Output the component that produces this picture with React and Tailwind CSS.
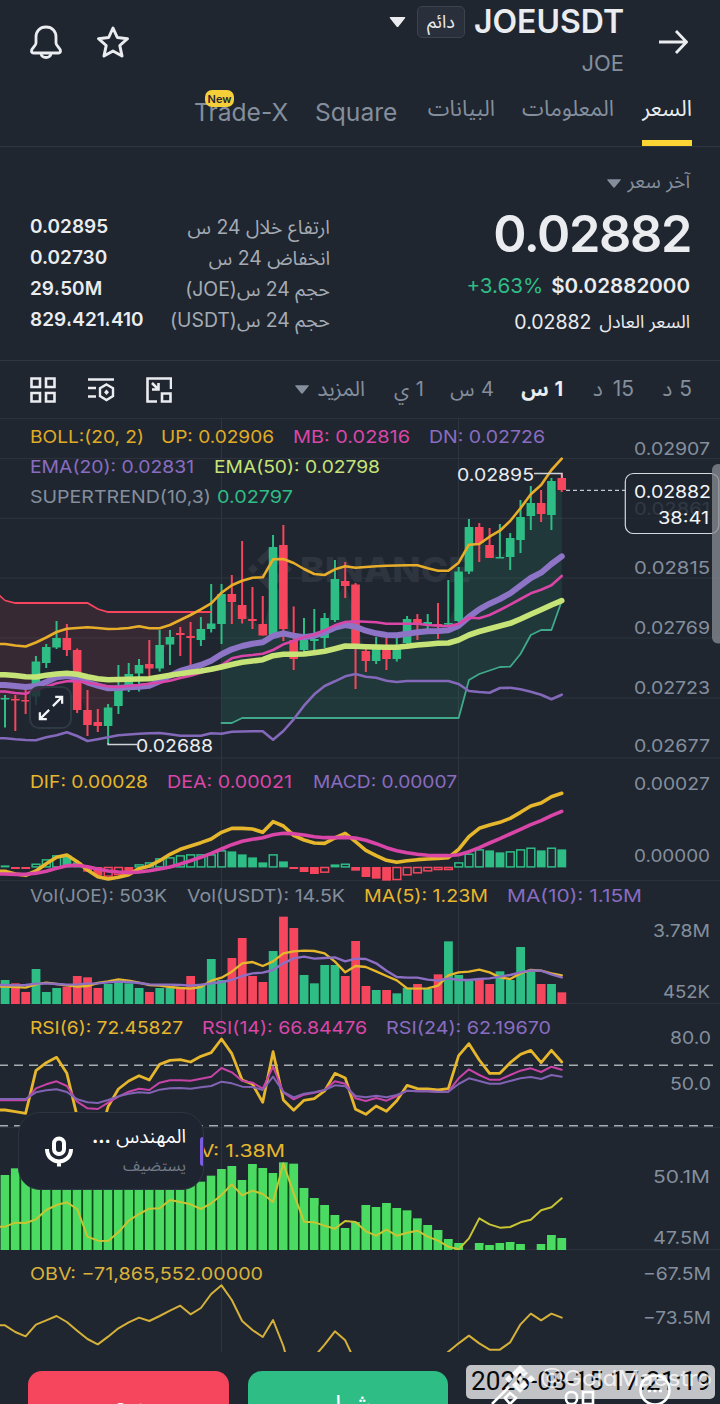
import React from "react";

const UP = "#2ebd85";
const DOWN = "#f6465d";
const YELLOW = "#e6b62c";
const PINK = "#d946a8";
const PURPLE = "#8a6cc0";
const GRAY = "#848e9c";
const LIME = "#c6e377";

const px = (i) => 5 + i * 10.31;

// [color, body top, body bottom, wick top, wick bottom]
const candles = [
  ["g", 698, 699.5, 695, 727.5], ["r", 699, 700.5, 695, 731], ["r", 700, 701.5, 690, 714],
  ["g", 661.5, 696.5, 656, 705], ["g", 647, 663, 644, 668], ["g", 638, 647.5, 621, 649],
  ["r", 638, 650, 624, 656], ["r", 650, 710, 648.5, 713], ["r", 710, 725, 690, 736],
  ["r", 722, 726, 709, 732], ["g", 707.5, 726, 704, 744], ["g", 690, 706, 665, 714],
  ["g", 674, 688, 663, 692], ["g", 665, 673.5, 659, 691.5], ["r", 664, 668.5, 640, 678],
  ["g", 645, 668.5, 630, 671.5], ["g", 637, 644.5, 630, 665], ["r", 633, 635, 627, 656],
  ["r", 636, 638, 622, 667], ["g", 629, 640, 617, 646], ["g", 623.5, 629, 584, 632.5],
  ["g", 594, 624, 584, 644], ["r", 594, 602, 575, 624], ["r", 605, 619, 541, 623.5],
  ["r", 619, 621, 587, 629], ["r", 624, 635.5, 596, 635.5], ["g", 547, 636, 535, 636],
  ["r", 545, 629, 525, 641], ["r", 640, 659, 606.5, 670], ["g", 640, 650, 618, 653],
  ["g", 639, 641, 609, 652], ["g", 618, 638, 613, 648], ["g", 579, 620, 560, 622],
  ["r", 581, 586, 562, 598], ["r", 584.5, 648, 583, 689], ["r", 651, 661, 648, 672],
  ["g", 648, 661, 637, 664], ["r", 645, 659, 637, 670], ["g", 645, 659, 638, 661.5],
  ["g", 619, 643, 616, 645], ["r", 619, 624, 614, 640], ["g", 622, 624, 614, 632],
  ["r", 624, 626, 603, 639], ["g", 623, 624.5, 580, 627], ["g", 571.5, 621, 567, 622],
  ["g", 527, 571.5, 519, 574], ["r", 527, 543, 523, 562], ["r", 545, 558, 528, 558],
  ["g", 557, 558.5, 524, 558], ["g", 538, 557, 533, 570], ["g", 517, 540, 500, 553],
  ["g", 503, 516, 486, 530], ["r", 503, 514, 490, 522], ["g", 481, 515, 478, 530],
  ["r", 478, 490, 473, 492],
];

const bollUp = [644, 645.5, 646.5, 642.5, 637.5, 632, 628.7, 628, 627.3, 628, 629, 628.7, 628, 626.3, 628.3, 628.3, 625, 620, 615, 609.3, 603.3, 592.7, 585.3, 580.7, 577.7, 577.3, 559.3, 559, 563, 569, 574, 575, 569.3, 566.3, 567.7, 567, 566.3, 565.7, 565.5, 565.3, 565.3, 568.3, 570.7, 570.7, 562.7, 544.7, 544, 536.7, 530.7, 521, 508.3, 494.3, 485, 470, 458.7];
const bollMid = [691.5, 693, 693.7, 690, 686.7, 683.3, 681.3, 681, 682.7, 684.5, 686.5, 687, 686, 685, 683.7, 682.5, 680.7, 678, 675.7, 672.7, 669.3, 665, 658.3, 656, 655, 653.7, 650, 644.3, 641, 637.3, 634.7, 630.3, 625.3, 622, 621.3, 621.7, 622.3, 623.7, 623.7, 623.7, 623.7, 625, 625.7, 626, 624, 617.7, 618.3, 615, 610, 604.7, 599, 593.3, 589.7, 585.3, 576];
const bollDn = [738.3, 739.3, 740, 740.3, 737.3, 735.3, 732.3, 736, 741, 739.2, 737.3, 735.3, 734.5, 733.7, 733.3, 733, 734.3, 735.7, 735.7, 735.7, 733.3, 733.7, 731.7, 731.5, 731.3, 731.3, 739.7, 731, 719.3, 705.7, 694.3, 686, 681.3, 676.3, 674, 676.7, 677.7, 680.7, 682, 681, 681, 681, 681, 681, 684, 691, 692, 692.7, 688, 687.7, 689.3, 691.7, 694.7, 699.3, 694.7];
const ema20 = [685, 686, 687, 686, 682, 677.3, 676, 677.7, 682.3, 685.7, 688.3, 688, 687.3, 686.7, 685.7, 681.3, 675.7, 671, 668, 665, 660.7, 654.3, 649.3, 646, 643.7, 642.3, 636, 633.3, 635.7, 637.3, 635.7, 632.3, 627.7, 625, 626.7, 630.7, 633.3, 635, 635.3, 633.7, 632.3, 631.3, 631, 630.3, 625.7, 617, 609.3, 603.7, 599, 593.3, 585.7, 578, 572.7, 564, 556.3];
const ema50 = [674.7, 675.5, 676.8, 677, 675.3, 674, 673.3, 674.3, 676.7, 678.7, 679.7, 679.5, 679.3, 679, 678.7, 677, 675.3, 673.8, 672.3, 671, 669.3, 667, 664.5, 662.3, 661, 659.7, 655.7, 654.3, 654.3, 654, 652.7, 651.3, 648.7, 646, 646.3, 646.7, 647, 647.2, 647.3, 646.3, 645, 644.2, 643.3, 643, 640, 635, 631.5, 628.7, 626, 623.3, 619, 614.3, 609.7, 605, 600.7];
const trendDown = [600.5, 603, 603, 603, 603, 603, 603, 603, 603, 609, 612, 612, 612, 612, 612, 612, 612, 612, 612, 612, 612];
const trendUp = [723, 723, 718, 718, 718, 718, 718, 718, 718, 718, 718, 718, 718, 718, 718, 718, 718, 718, 718, 718, 718, 718, 718, 718, 680, 674, 670.5, 667, 666.7, 654, 635, 630, 630, 601];

// the lower panels keep their samples in thirds of a pixel
// negative = below zero line, second value 1 = hollow bar
const macd = [[6, 0], [-6, 0], [-6, 0], [11, 1], [24, 1], [36, 1], [36, 0], [15, 0], [-14, 0], [-26, 0], [-29, 1], [-24, 1], [-19, 0], [9, 1], [15, 1], [27, 1], [30, 1], [36, 1], [39, 1], [39, 1], [39, 1], [51, 1], [48, 0], [39, 0], [30, 0], [15, 0], [39, 1], [18, 0], [-6, 0], [-15, 0], [-21, 0], [-17, 1], [9, 0], [11, 1], [-11, 0], [-30, 0], [-35, 0], [-41, 0], [-39, 1], [-25, 1], [-19, 1], [-13, 1], [-9, 1], [-9, 1], [15, 1], [41, 1], [54, 1], [51, 0], [45, 0], [48, 1], [54, 1], [59, 1], [51, 0], [59, 1], [54, 0]];
const dif = [334, 342, 346, 333, 311, 292, 285, 305, 330, 350, 357, 352, 344, 326, 318, 302, 283, 268, 258, 248, 237, 217, 205, 205, 207, 217, 185, 198, 226, 240, 249, 250, 234, 220, 245, 271, 287, 301, 307, 302, 299, 297, 295, 293, 268, 230, 205, 195, 187, 175, 157, 138, 129, 110, 100];
const dea = [342, 343, 343, 340, 334, 325, 317, 316, 320, 327, 333, 336, 338, 336, 332, 327, 321, 312, 302, 292, 280, 267, 254, 244, 238, 233, 224, 220, 221, 225, 230, 233, 233, 232, 234, 241, 251, 263, 272, 278, 283, 286, 287, 287, 284, 275, 263, 249, 236, 222, 208, 194, 182, 167, 154];

const volColors = "grrgggrrrrggggrggrrgggrrrrgrrggggrrrgrggrgrgggrrggggrgr";
const vol = [660, 670, 696, 627, 696, 684, 680, 648, 652, 684, 672, 660, 670, 684, 696, 684, 684, 684, 648, 675, 597, 660, 594, 534, 648, 666, 573, 470, 504, 645, 670, 615, 615, 648, 543, 678, 690, 690, 700, 683, 672, 687, 643, 544, 645, 663, 660, 672, 634, 660, 561, 635, 672, 672, 697];
const ma5 = [680, 681, 683, 673, 668, 672, 676, 680, 678, 669, 664, 658, 662, 668, 675, 677, 681, 684, 686, 681, 662, 653, 635, 610, 606, 618, 604, 580, 574, 572, 573, 580, 605, 637, 618, 621, 634, 648, 661, 685, 686, 685, 677, 646, 637, 635, 629, 637, 652, 657, 640, 630, 632, 640, 646];
const ma10 = [675, 676, 675, 671, 670, 672, 674, 673, 671, 670, 667, 665, 666, 669, 673, 674, 674, 675, 677, 674, 670, 666, 660, 648, 640, 638, 630, 610, 595, 590, 596, 594, 592, 604, 596, 597, 610, 632, 651, 653, 653, 659, 662, 655, 660, 660, 657, 655, 650, 645, 637, 631, 632, 643, 652];

const rsi6 = [300, 305, 310, 182, 158, 142, 190, 320, 400, 400, 290, 237, 213, 197, 210, 163, 151, 149, 156, 139, 128, 87, 131, 210, 222, 277, 125, 270, 301, 271, 266, 243, 190, 204, 298, 313, 288, 304, 272, 226, 236, 237, 240, 236, 137, 101, 150, 190, 190, 158, 133, 121, 158, 121, 156];
const rsi14 = [271, 271, 271, 235, 223, 214, 228, 275, 295, 297, 278, 260, 245, 236, 240, 218, 211, 211, 212, 206, 200, 174, 187, 212, 218, 236, 170, 247, 268, 254, 248, 240, 214, 221, 265, 273, 264, 272, 258, 242, 244, 244, 245, 245, 205, 178, 195, 209, 209, 195, 182, 175, 186, 170, 179];
const rsi24 = [267, 267, 267, 247, 241, 238, 246, 268, 277, 279, 270, 259, 251, 247, 249, 239, 235, 234, 236, 232, 228, 215, 220, 230, 231, 240, 200, 246, 262, 251, 247, 240, 226, 229, 258, 262, 257, 262, 255, 242, 244, 244, 246, 245, 222, 205, 213, 221, 221, 213, 205, 201, 207, 195, 200];

const flow = [495, 475, 470, 470, 470, 470, 470, 470, 470, 470, 470, 470, 470, 470, 470, 470, 470, 480, 500, 515, 497, 477, 468, 510, 462, 474, 489, 457, 461, 534, 564, 585, 615, 654, 636, 585, 591, 579, 594, 601, 625, 645, 660, 687, 699, 720, 699, 705, 699, 696, 702, 720, 702, 675, 684];
const flowLine = [650, 638, 639, 628, 600, 585, 577, 597, 680, 692, 693, 667, 632, 612, 596, 595, 570, 576, 583, 597, 580, 555, 523, 556, 542, 552, 576, 460, 550, 635, 637, 647, 656, 633, 636, 664, 677, 659, 677, 668, 662, 680, 692, 710, 718, 685, 625, 643, 653, 651, 637, 629, 601, 592, 565];
const obv = [226, 246, 259, 224, 211, 198, 216, 242, 267, 283, 260, 235, 217, 203, 213, 198, 182, 167, 193, 174, 132, 106, 150, 213, 240, 261, 210, 288, 400, 380, 320, 284, 244, 271, 337, 380, 400, 400, 400, 400, 400, 380, 340, 305, 280, 257, 280, 299, 299, 277, 223, 191, 211, 191, 203];

const Line = ({ ys, y0 = 0, k = 1, from = 0, color, width = 2.6 }) => {
  const pts = ys.map((v, i) => `${px(i + from)},${y0 + v * k}`);
  if (from === 0) pts.unshift(`-5,${y0 + ys[0] * k}`);
  return (
    <polyline
      points={pts.join(" ")}
      fill="none"
      stroke={color}
      strokeWidth={width}
      strokeLinejoin="round"
      strokeLinecap="round"
    />
  );
};

const Label = ({ x, y, w, fill = GRAY, size = 17.4, children, ...rest }) => (
  <text x={x} y={y} textLength={w} lengthAdjust="spacingAndGlyphs" fill={fill} fontSize={size} {...rest}>
    {children}
  </text>
);

const Panel = ({ top, height, className, children }) => (
  <svg className={`block w-full shrink-0 ${className}`} viewBox={`0 ${top} 720 ${height}`}>
    <g stroke="#2e353f" strokeWidth="1">
      <path d={`M221.5 ${top}V${top + height}M458.5 ${top}V${top + height}`} />
    </g>
    {children}
  </svg>
);

const Grid = ({ ys }) => (
  <g stroke="#2b323c" strokeWidth="1.2">
    {ys.map((y) => (
      <path key={y} d={`M0 ${y}H720`} />
    ))}
  </g>
);

const mid = (i) => (candles[i][1] + candles[i][2]) / 2;

const area = (ys, from) => {
  const edge = ys.map((v, i) => `${px(i + from)},${v}`);
  const body = ys.map((_, i) => `${px(i + from)},${mid(i + from)}`).reverse();
  if (from === 0) {
    edge.unshift("0,597");
    body.push("0,699");
  }
  return [...edge, ...body].join(" ");
};

const PriceChart = () => (
  <Panel top={418} height={342} className="h-[342px]">
    <Grid ys={[418.5, 458.5, 518.3, 578.2, 638, 697.8, 757.8]} />
    <g fill="#2e353f">
      <g transform="translate(270 569)">
        <path d="M0 -22L13 -9L8 -4L0 -12L-8 -4L-13 -9Z" />
        <path d="M0 22L13 9L8 4L0 12L-8 4L-13 9Z" />
        <path d="M-17 -5L-12 0L-17 5L-22 0ZM17 -5L22 0L17 5L12 0ZM0 -5L5 0L0 5L-5 0Z" />
      </g>
      <Label x="300" y="581.5" w="171" size="34" fill="#2e353f" fontWeight="800">BINANCE</Label>
    </g>
    <polygon points={area(trendDown, 0)} fill={DOWN} fillOpacity="0.11" />
    <polygon points={area(trendUp, 21)} fill={UP} fillOpacity="0.12" />
    {candles.map(([c, t, b, wt, wb], i) => (
      <g key={i} fill={c === "g" ? UP : DOWN}>
        <rect x={px(i) - 1} y={wt} width="2" height={wb - wt} />
        <rect x={px(i) - 4.3} y={t} width="8.6" height={b - t} />
      </g>
    ))}
    <polyline points="-1,595 5,600.5" stroke={DOWN} strokeWidth="1.6" />
    <polyline points={trendDown.map((v, i) => `${px(i)},${v}`).join(" ")} fill="none" stroke={DOWN} strokeWidth="1.8" />
    <Line ys={trendUp} from={21} color="#3fa98a" width={1.8} />
    <Line ys={bollUp} color="#e9ae29" />
    <Line ys={ema20} color="#8d74c6" width={6} />
    <Line ys={bollMid} color={PINK} width={2.6} />
    <Line ys={ema50} color={LIME} width={5.6} />
    <Line ys={bollDn} color="#8468ba" width={2.6} />
    <path d="M534 473.5H562V478M108 743V744.5H137" stroke="#cfd3d8" strokeWidth="1.3" fill="none" />
    <path d="M566 490.3H625" stroke="#c3c7cc" strokeWidth="1.2" strokeDasharray="4 3" />
    <Label x="457" y="480.5" w="77" fill="#eaecef">0.02895</Label>
    <Label x="136" y="751.5" w="77" fill="#eaecef">0.02688</Label>
    <Label x="30" y="443" w="114" fill="#e0ac25">BOLL:(20, 2)</Label>
    <Label x="161" y="443" w="113" fill="#e0ac25">UP: 0.02906</Label>
    <Label x="293" y="443" w="117" fill={PINK}>MB: 0.02816</Label>
    <Label x="429" y="443" w="116" fill={PURPLE}>DN: 0.02726</Label>
    <Label x="30" y="473" w="164" fill={PURPLE}>EMA(20): 0.02831</Label>
    <Label x="214" y="473" w="166" fill={LIME}>EMA(50): 0.02798</Label>
    <Label x="30" y="503" w="181">SUPERTREND(10,3)</Label>
    <Label x="217" y="503" w="76" fill={UP}>0.02797</Label>
    <Label x="634" y="455" w="76">0.02907</Label>
    <Label x="634" y="514.5" w="76">0.02861</Label>
    <Label x="634" y="574" w="76">0.02815</Label>
    <Label x="634" y="634" w="76">0.02769</Label>
    <Label x="634" y="694" w="76">0.02723</Label>
    <Label x="634" y="752" w="76">0.02677</Label>
    <rect x="625.3" y="473.5" width="93.5" height="60" rx="8" fill="#1f2630" fillOpacity="0.82" stroke="#d5d8dc" strokeWidth="1.2" />
    <Label x="634" y="498" w="77" fill="#f2f4f6">0.02882</Label>
    <Label x="658" y="524" w="51" fill="#f2f4f6">38:41</Label>
    <rect x="712" y="464" width="12" height="179.5" rx="6" fill="#8b8e94" fillOpacity="0.75" />
  </Panel>
);

const MacdChart = () => (
  <Panel top={760} height={121} className="h-[121px]">
    <Grid ys={[880.5]} />
    {macd.map(([v, hollow], i) => {
      const h = Math.abs(v) / 3;
      const y = v > 0 ? 867.4 - h : 867;
      const color = v > 0 ? UP : DOWN;
      return hollow ? (
        <rect key={i} x={px(i) - 3.8} y={y + 0.5} width="7.8" height={Math.max(h - 1, 1)} fill="#1f2630" stroke={color} strokeWidth="1.5" />
      ) : (
        <rect key={i} x={px(i) - 4.3} y={y} width="8.8" height={h} fill={color} />
      );
    })}
    <Line ys={dif} y0={760} k={1 / 3} color={YELLOW} width={3.6} />
    <Line ys={dea} y0={760} k={1 / 3} color={PINK} width={3.6} />
    <Label x="30" y="788" w="118" fill={YELLOW}>DIF: 0.00028</Label>
    <Label x="167" y="788" w="125" fill={PINK}>DEA: 0.00021</Label>
    <Label x="313" y="788" w="144" fill={PURPLE}>MACD: 0.00007</Label>
    <Label x="634" y="790" w="76">0.00027</Label>
    <Label x="634" y="862" w="76">0.00000</Label>
  </Panel>
);

const VolumeChart = () => (
  <Panel top={881} height={123} className="h-[123px]">
    <Grid ys={[1003.6]} />
    {vol.map((v, i) => (
      <rect key={i} x={px(i) - 4.3} y={760 + v / 3} width="8.8" height={(732 - v) / 3} fill={volColors[i] === "g" ? UP : DOWN} />
    ))}
    <Line ys={ma5} y0={760} k={1 / 3} color={YELLOW} width={2.4} />
    <Line ys={ma10} y0={760} k={1 / 3} color="#8d6fc4" width={2.4} />
    <Label x="30" y="902" w="137">Vol(JOE): 503K</Label>
    <Label x="187" y="902" w="158">Vol(USDT): 14.5K</Label>
    <Label x="364" y="902" w="124" fill={YELLOW}>MA(5): 1.23M</Label>
    <Label x="507" y="902" w="135" fill={PURPLE}>MA(10): 1.15M</Label>
    <Label x="653" y="937" w="57">3.78M</Label>
    <Label x="663" y="998" w="47">452K</Label>
  </Panel>
);

const RsiChart = () => (
  <Panel top={1004} height={123} className="h-[123px]">
    <path d="M-1 1065.2H716M-1 1125.8H716" stroke="#a9adb2" strokeWidth="1.6" strokeDasharray="9 6" />
    <Line ys={rsi6} y0={1010} k={1 / 3} color={YELLOW} width={2.8} />
    <Line ys={rsi14} y0={1010} k={1 / 3} color="#c843a8" width={2} />
    <Line ys={rsi24} y0={1010} k={1 / 3} color="#8163b4" width={2} />
    <Label x="30" y="1034" w="153" fill={YELLOW}>RSI(6): 72.45827</Label>
    <Label x="202" y="1034" w="165" fill={PINK}>RSI(14): 66.84476</Label>
    <Label x="386" y="1034" w="165" fill={PURPLE}>RSI(24): 62.19670</Label>
    <Label x="670" y="1044" w="41">80.0</Label>
    <Label x="670" y="1090" w="41">50.0</Label>
  </Panel>
);

const FlowChart = () => (
  <Panel top={1127} height={123} className="h-[123px]">
    <Grid ys={[1127.3, 1249.6]} />
    {flow.map((v, i) => (
      <g key={i}>
        {i > 0 && v < 720 && flow[i - 1] < 720 && (
          <rect x={px(i) - 6} y={1010 + Math.max(v, flow[i - 1]) / 3} width="2" height={240 - Math.max(v, flow[i - 1]) / 3} fill="#0c4a18" />
        )}
        <rect x={px(i) - 4.4} y={1010 + v / 3} width="8.8" height={(720 - v) / 3} fill="#4bdb62" />
      </g>
    ))}
    <Line ys={flowLine} y0={1010} k={1 / 3} color="#c9c532" width={2} />
    <Label x="169.5" y="1157" w="115.5" fill={YELLOW}>OBV: 1.38M</Label>
    <Label x="653" y="1183" w="57">50.1M</Label>
    <Label x="653" y="1244" w="57">47.5M</Label>
  </Panel>
);

const ObvChart = () => (
  <Panel top={1250} height={102} className="h-[102px]">
    <Line ys={obv} y0={1250} k={1 / 3} color="#d6b13a" width={2} />
    <Label x="30" y="1280" w="233" fill="#d9b23a">OBV: −71,865,552.00000</Label>
    <Label x="643" y="1280" w="68">−67.5M</Label>
    <Label x="643" y="1324" w="68">−73.5M</Label>
  </Panel>
);

const Caret = ({ className }) => (
  <svg viewBox="0 0 16 10" className={className} fill="currentColor">
    <path d="M1 0H15Q16.5 0 15.5 1.2L9 9.4Q8 10.4 7 9.4L0.5 1.2Q-0.5 0 1 0Z" />
  </svg>
);

const Header = () => (
  <header className="flex h-[88px] justify-between pr-[32px] pl-[29px]">
    <div className="flex gap-[33px] pt-[24px]">
      <svg viewBox="0 0 34 36" className="h-[36px] w-[34px]" fill="none" stroke="#eaecef" strokeWidth="2.8" strokeLinejoin="round">
        <path d="M17 3C10.5 3 7 7.500 7 13V19C7 22 2.500 24 2.500 27C2.500 28.500 3.500 29 5 29H29C30.500 29 31.500 28.500 31.500 27C31.500 24 27 22 27 19V13C27 7.500 23.500 3 17 3Z" />
        <path d="M12 29C12 35 22 35 22 29" />
      </svg>
      <svg viewBox="0 0 34 36" className="h-[36px] w-[34px]" fill="none" stroke="#eaecef" strokeWidth="3" strokeLinejoin="round">
        <path d="M17 4L21.300 13.500L31.500 14.700L23.800 21.500L26 32L17 27L8 32L10.200 21.500L2.500 14.700L12.700 13.500Z" />
      </svg>
    </div>
    <div className="flex items-start gap-[34px]">
      <div className="flex flex-col items-end">
        <div className="flex items-center gap-[9px] pt-[2px]">
          <Caret className="mr-[2px] h-[10px] w-[17px] text-[#eaecef]" />
          <span dir="rtl" className="flex h-[32px] w-[48px] items-center justify-center rounded-[5px] border border-[#3b434f] bg-[#29303c] text-[18px] leading-none text-[#eaecef]">
            دائم
          </span>
          <h1 className="text-[32px] leading-[40px] font-semibold text-[#eaecef]">JOEUSDT</h1>
        </div>
        <p className="text-[22px] leading-[42px] text-[#848e9c]">JOE</p>
      </div>
      <svg viewBox="0 0 30 26" className="mt-[29px] h-[26px] w-[30px]" fill="none" stroke="#eaecef" strokeWidth="2.800">
        <path d="M1 13H28M18 2L28.500 13L18 24" />
      </svg>
    </div>
  </header>
);

const Tabs = () => (
  <nav dir="rtl" className="flex h-[59px] gap-[28px] border-b border-[#2f3641] pr-[28px] text-[22px] leading-[40px] text-[#848e9c]">
    <div className="flex w-[50px] flex-col justify-between text-[#eaecef]">
      <span className="whitespace-nowrap">السعر</span>
      <i className="block h-[6px] bg-[#fcd535]" />
    </div>
    <span className="w-[91px] whitespace-nowrap">المعلومات</span>
    <span className="w-[70px] whitespace-nowrap">البيانات</span>
    <span dir="ltr" className="w-[82px] pt-[4px] text-[24.600px]">Square</span>
    <span dir="ltr" className="relative w-[93px] pt-[4px] text-[24.600px] whitespace-nowrap">
      Trade-X
      <b className="absolute top-[2px] left-[11px] flex h-[17px] w-[29px] items-center justify-center rounded-[7px] bg-[#f5cf3a] text-[11px] font-semibold text-[#1f2630]">
        New
      </b>
    </span>
  </nav>
);

const stats = [
  ["ارتفاع خلال 24 س", "0.02895"],
  ["انخفاض 24 س", "0.02730"],
  ["حجم 24 س(JOE)", "29،50M"],
  ["حجم 24 س(USDT)", "829،421،410"],
];

const Summary = () => (
  <section className="flex h-[213px] justify-between pr-[30px] pl-[30px]">
    <div className="flex w-[300px] flex-col pt-[65px]">
      {stats.map(([label, value]) => (
        <div key={value} className="flex h-[31px] items-center justify-between text-[19px]">
          <b className="font-semibold text-[#eaecef]">{value}</b>
          <span dir="rtl" className="text-[19.400px] text-[#a5abb4]">{label}</span>
        </div>
      ))}
    </div>
    <div className="flex flex-col items-end">
      <div dir="rtl" className="mt-[20px] flex h-[30px] items-center gap-[7px] text-[19.500px] text-[#848e9c]">
        <span>آخر سعر</span>
        <Caret className="mt-[3px] h-[9px] w-[14px]" />
      </div>
      <p className="mt-[9px] mr-[-1px] text-[50.500px] leading-[56px] font-semibold tracking-[-1.400px] text-[#eaecef]">0.02882</p>
      <p className="mt-[9px] flex gap-[8px] text-[20.600px] leading-[30px]">
        <span className="text-[#2ebd85]">+3.63%</span>
        <b className="font-semibold text-[#eaecef]">$0.02882000</b>
      </p>
      <p dir="rtl" className="mt-[5px] flex gap-[8px] text-[18px] leading-[32px] text-[#eaecef]">
        <span>السعر العادل</span>
        <span className="text-[19.500px]">0.02882</span>
      </p>
    </div>
  </section>
);

const Toolbar = () => (
  <section className="flex h-[58px] items-center justify-between border-t border-[#2f3641] pr-[28px] pl-[30px]">
    <div className="flex gap-[31px]">
      <svg viewBox="0 0 26 26" className="h-[26px] w-[26px]" fill="none" stroke="#eaecef" strokeWidth="2.600">
        <path d="M1.500 1.500H10V10H1.500ZM16 1.500H24.500V10H16ZM1.500 16H10V24.500H1.500ZM16 16H24.500V24.500H16Z" />
      </svg>
      <svg viewBox="0 0 28 26" className="h-[26px] w-[28px]" fill="none" stroke="#eaecef" strokeWidth="2.400">
        <path d="M1 2.500H27M1 11H9M1 19.500H9" />
        <path d="M19.500 7.500L26 11.300V19L19.500 23L13 19V11.300Z" />
        <path d="M19.500 12.500L22 15.200L19.500 18L17 15.200Z" fill="#eaecef" stroke="none" />
      </svg>
      <svg viewBox="0 0 26 26" className="h-[26px] w-[26px]" fill="none" stroke="#eaecef" strokeWidth="2.600">
        <path d="M25 12V1.500H1.500V24.500H11M16 16.500H24.500V24.500H16ZM6 6L12 12M12.500 6V12.500H6" />
      </svg>
    </div>
    <div dir="rtl" className="flex items-center gap-[29px] pb-[2px] text-[21px] whitespace-nowrap text-[#848e9c] [word-spacing:1px]">
      <span className="w-[29px]">5 د</span>
      <span className="w-[42px] [word-spacing:4px]">15 د</span>
      <span className="w-[40px] text-[20px] font-bold text-[#eaecef]">1 س</span>
      <span className="w-[41px] text-[20px]">4 س</span>
      <span className="w-[30px] text-[20px]">1 ي</span>
      <span className="flex items-center gap-[8px]">
        <span className="w-[48px]">المزيد</span>
        <Caret className="mt-[2px] h-[9px] w-[14px]" />
      </span>
    </div>
  </section>
);

const Footer = () => (
  <footer className="flex h-[52px] gap-[19px] overflow-hidden pt-[19px] pl-[28px] text-[26px] text-white">
    <button className="h-[66px] w-[201px] shrink-0 rounded-[14px] bg-[#f6465d]">بيع</button>
    <button className="h-[66px] w-[200px] shrink-0 rounded-[14px] bg-[#2ebd85]">شراء</button>
  </footer>
);

const VoicePill = () => (
  <div className="absolute top-[1112px] left-[18px] flex h-[78px] w-[186px] items-center justify-between overflow-hidden rounded-[22px] border-[1.5px] border-[#2d3540] bg-[#1f2530] pr-[17px] pl-[25px]">
    <svg viewBox="0 0 30 32" className="h-[32px] w-[30px]" fill="none" stroke="#fff" strokeWidth="4">
      <rect x="10" y="3.500" width="10" height="15.500" rx="5" />
      <path d="M3 14C3 30.500 27 30.500 27 14M15 26V31.500" />
    </svg>
    <div dir="rtl" className="flex flex-col text-[19px] leading-[28px]">
      <span className="text-white">المهندس <b>...</b></span>
      <span className="text-[16px] text-[#737b88]">يستضيف</span>
    </div>
    <i className="absolute top-[24px] right-0 h-[29px] w-[3px] rounded-l bg-[#7c5ce0]" />
  </div>
);

const ExpandButton = () => (
  <div className="absolute top-[686px] left-[29px] flex h-[43px] w-[43px] items-center justify-center rounded-[10px] border-2 border-[#2e3a42] bg-[#1f2630]/85">
    <svg viewBox="0 0 28 28" className="h-[26px] w-[26px]" fill="none" stroke="#f2f4f6" strokeWidth="2.400">
      <path d="M16 12L26 2M18.500 2H26V9.500M12 16L2 26M2 18.500V26H9.500" />
    </svg>
  </div>
);

const Stamp = () => (
  <div className="absolute top-[1360px] left-[466px] h-[44px] w-[254px] overflow-hidden">
    <div className="mt-[5px] h-[34px] w-[249px] rounded-[5px] bg-[#c2c3c7]" />
    <svg viewBox="466 1360 254 44" className="absolute inset-0 h-full w-full">
      <text x="471" y="1390" textLength="240" lengthAdjust="spacingAndGlyphs" fontSize="25" fill="#08090b" fontFamily="Roboto">
        2026-08-15 17:21:19
      </text>
      <g fill="none" stroke="#fff" strokeWidth="2.600">
        <path d="M492 1404L509 1387M505 1398L510 1393L516 1398L510 1404Z" />
        <rect x="566" y="1392" width="11" height="12" rx="5" />
        <rect x="583" y="1392" width="10" height="12" />
        <circle cx="655" cy="1390" r="14.500" />
        <path d="M648 1391H662" strokeDasharray="3 2.500" />
      </g>
      <g fill="#fff" fillOpacity="0.9">
        <path d="M520 1365L528 1373L524 1377L520 1373L516 1377L512 1373ZM520 1393L528 1385L524 1381L520 1385L516 1381L512 1385ZM509 1375L513 1379L509 1383L505 1379ZM531 1375L535 1379L531 1383L527 1379ZM520 1376L523 1379L520 1382L517 1379Z" />
      </g>
      <text x="540" y="1386" textLength="172" lengthAdjust="spacingAndGlyphs" fontSize="22" fill="#fff" fillOpacity="0.75">
        @GoldMaestro
      </text>
    </svg>
  </div>
);

const App = () => {
  return (
    <main className="relative flex h-[1404px] w-[720px] flex-col overflow-hidden bg-[#1f2630] font-['Inter','Noto_Sans_Arabic','Noto_Sans','DejaVu_Sans',sans-serif]">
      <Header />
      <Tabs />
      <Summary />
      <Toolbar />
      <PriceChart />
      <MacdChart />
      <VolumeChart />
      <RsiChart />
      <FlowChart />
      <ObvChart />
      <Footer />
      <ExpandButton />
      <VoicePill />
      <Stamp />
    </main>
  );
};

export default App;
